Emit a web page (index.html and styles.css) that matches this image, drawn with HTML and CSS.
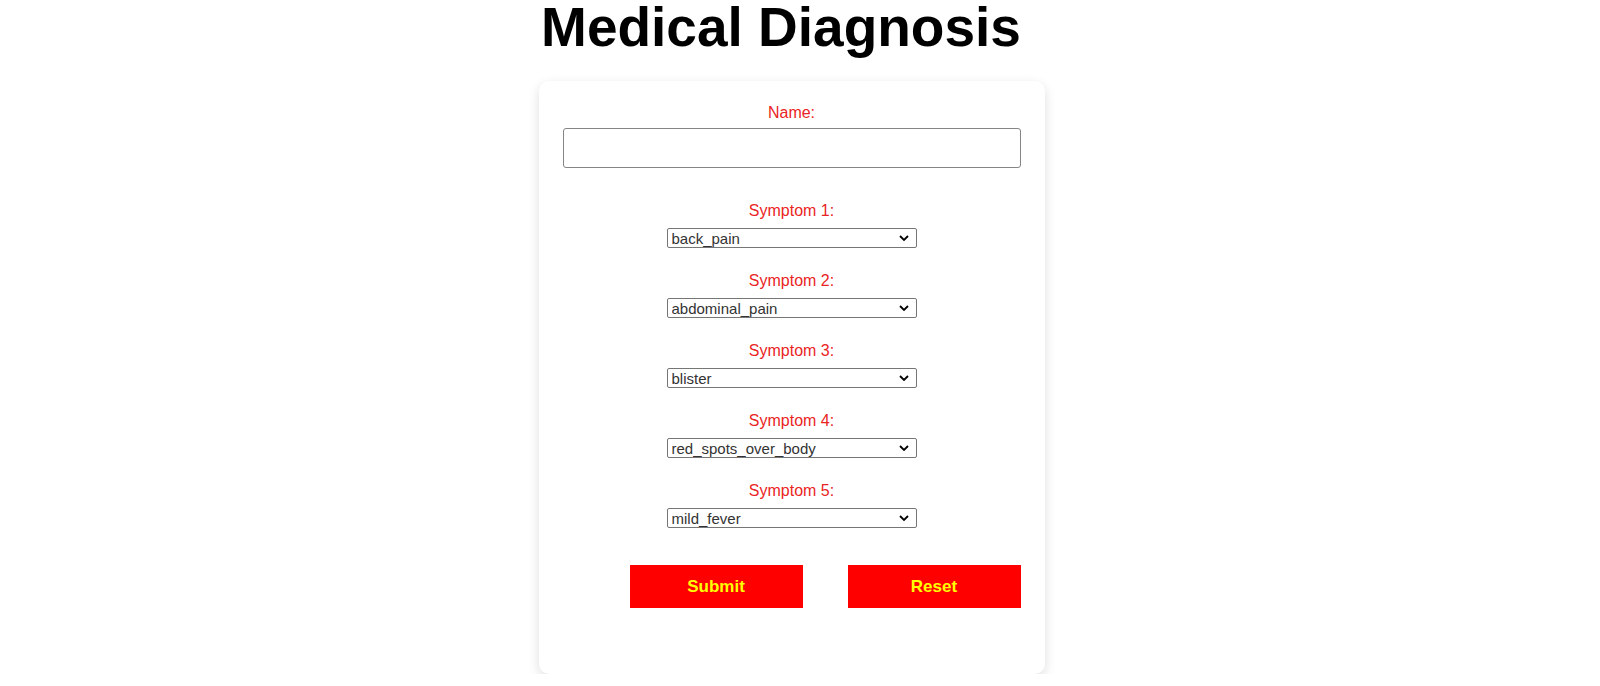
FILE: index.html
```html
<!DOCTYPE html>
<html>
  <head>
    <meta http-equiv="Content-Type" content="text/html;charset=UTF-8">
    <title>Medical Diagnosis</title>
    <link rel="stylesheet" href="styles.css">
  </head>
  <body>
    <div class="page">
      <h1 class="title">Medical Diagnosis</h1>
      <form class="card" onsubmit="return false">
        <div class="field name-field">
          <label for="name">Name:</label>
          <input type="text" id="name" class="name-input">
        </div>
        <div class="symptoms">
          <div class="field">
            <label for="s1">Symptom 1:</label>
            <select id="s1" class="pick">
              <option>back_pain</option>
              <option>abdominal_pain</option>
              <option>blister</option>
            </select>
          </div>
          <div class="field">
            <label for="s2">Symptom 2:</label>
            <select id="s2" class="pick">
              <option>abdominal_pain</option>
              <option>back_pain</option>
            </select>
          </div>
          <div class="field">
            <label for="s3">Symptom 3:</label>
            <select id="s3" class="pick">
              <option>blister</option>
              <option>back_pain</option>
            </select>
          </div>
          <div class="field">
            <label for="s4">Symptom 4:</label>
            <select id="s4" class="pick">
              <option>red_spots_over_body</option>
              <option>blister</option>
            </select>
          </div>
          <div class="field">
            <label for="s5">Symptom 5:</label>
            <select id="s5" class="pick">
              <option>mild_fever</option>
              <option>blister</option>
            </select>
          </div>
        </div>
        <div class="buttons">
          <button type="submit" class="btn">Submit</button>
          <button type="reset" class="btn">Reset</button>
        </div>
      </form>
    </div>
  </body>
</html>
```

FILE: styles.css
```css
body {
  margin: 0;
  background: #fff;
  font-family: "Liberation Sans", Arial, sans-serif;
}
.page {
  padding-right: 17px;
}
.title {
  margin: 0;
  padding-right: 21px;
  font-size: 55px;
  line-height: 55px;
  font-weight: bold;
  text-align: center;
  color: #000;
}
.card {
  box-sizing: border-box;
  width: 506px;
  margin: 26px auto 0;
  padding: 23px 24px 66px;
  background: #fff;
  border-radius: 10px;
  box-shadow: 0 4px 12px rgba(0, 0, 0, 0.13);
}
.field {
  display: flex;
  flex-direction: column;
  align-items: center;
  gap: 8px;
}
.name-field {
  gap: 6px;
  align-items: stretch;
}
label {
  display: block;
  text-align: center;
  font-size: 16px;
  line-height: 18px;
  color: #ea2424;
}
.name-input {
  box-sizing: border-box;
  height: 40px;
  border: 1px solid #858585;
  border-radius: 3px;
}
.symptoms {
  display: flex;
  flex-direction: column;
  gap: 24px;
  margin-top: 34px;
}
.pick {
  box-sizing: border-box;
  width: 250px;
  height: 20px;
  padding: 0 20px 0 4px;
  font-family: "Liberation Sans", Arial, sans-serif;
  font-size: 15px;
  color: #333;
  border: 1px solid #767676;
  border-radius: 2px;
  appearance: none;
  -webkit-appearance: none;
  background: #fff url("data:image/svg+xml,%3Csvg xmlns='http://www.w3.org/2000/svg' width='10' height='6' viewBox='0 0 10 6'%3E%3Cpath d='M1 1l4 4 4-4' fill='none' stroke='%23000' stroke-width='1.8'/%3E%3C/svg%3E") no-repeat right 7px center;
}
.buttons {
  display: flex;
  justify-content: flex-end;
  gap: 45px;
  margin-top: 37px;
}
.btn {
  width: 173px;
  height: 43px;
  border: none;
  background: #ff0000;
  color: #ffff00;
  font-family: "Liberation Sans", Arial, sans-serif;
  font-size: 17px;
  font-weight: bold;
}
```
